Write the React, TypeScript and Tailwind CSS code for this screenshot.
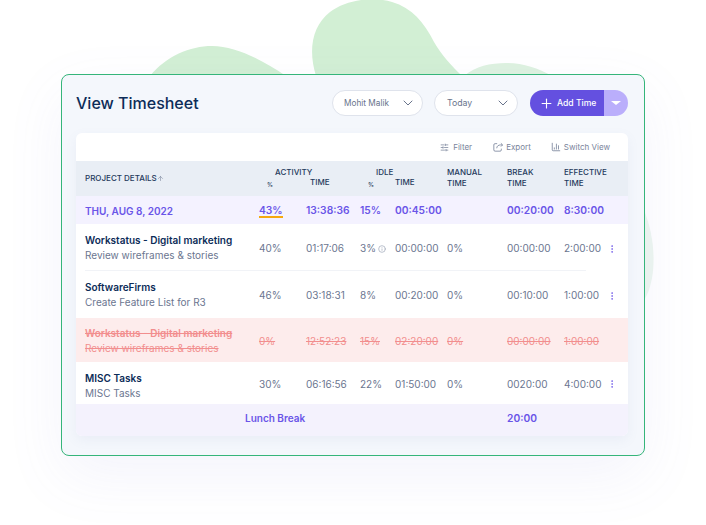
import { ChevronDown, Plus, SlidersHorizontal, ChartColumn, Info, EllipsisVertical, ArrowUp } from 'lucide-react'

const cols = 'grid grid-cols-[174px_47px_54px_35px_52px_60px_57px_48px_1fr] pl-[9px] items-center'

interface Row {
  title: string
  sub: string
  activity: string
  time: string
  idle: string
  idleTime: string
  manual: string
  brk: string
  effective: string
  info?: boolean
  height: string
  divider?: boolean
  namePad?: string
}

const rows: Row[] = [
  {
    title: 'Workstatus - Digital marketing',
    sub: 'Review wireframes & stories',
    activity: '40%',
    time: '01:17:06',
    idle: '3%',
    idleTime: '00:00:00',
    manual: '0%',
    brk: '00:00:00',
    effective: '2:00:00',
    info: true,
    height: 'h-[47px] pt-[2px]',
    divider: true,
    namePad: '-mt-[2px]',
  },
  {
    title: 'SoftwareFirms',
    sub: 'Create Feature List for R3',
    activity: '46%',
    time: '03:18:31',
    idle: '8%',
    idleTime: '00:20:00',
    manual: '0%',
    brk: '00:10:00',
    effective: '1:00:00',
    height: 'h-[47px] pt-[2px]',
    namePad: '-mt-[2px]',
  },
]

const Dots = () => <EllipsisVertical className="w-[10px] h-[10px] -ml-[5px] text-[#7a66ea]" strokeWidth={2} />

const ExportIcon = () => (
  <svg className="w-[10px] h-[10px]" viewBox="0 0 12 12" fill="none" stroke="currentColor" strokeWidth="1">
    <path d="M5 2H2.500A1.500 1.500 0 0 0 1 3.500v6A1.500 1.500 0 0 0 2.500 11h6A1.500 1.500 0 0 0 10 9.500V8" />
    <path d="M4.500 7.500C4.500 5 6.500 3.500 9 3.500H11.500M9.500 1.500L11.500 3.500L9.500 5.500" />
  </svg>
)

const DataRow = ({ row }: { row: Row }) => (
  <div className={`${cols} ${row.height} relative text-[10px] text-[#6b7690]`}>
    <div className={`min-w-0 ${row.namePad ?? ''}`}>
      <div className="text-[10px] leading-[15px] font-semibold text-[#0c2c58] whitespace-nowrap">{row.title}</div>
      <div className="text-[10px] leading-[15px] text-[#6b7690] whitespace-nowrap">{row.sub}</div>
    </div>
    <div>{row.activity}</div>
    <div>{row.time}</div>
    <div className="flex items-center gap-[2px]">
      {row.idle}
      {row.info && <Info className="w-[8px] h-[8px] text-[#9aa3b5]" />}
    </div>
    <div>{row.idleTime}</div>
    <div>{row.manual}</div>
    <div>{row.brk}</div>
    <div>{row.effective}</div>
    <Dots />
    {row.divider && <div className="absolute left-[9px] right-[42px] bottom-0 h-px bg-[#f1f3f7]" />}
  </div>
)

const App = () => {
  return (
    <div className="relative w-[706px] h-[525px] overflow-hidden bg-white pt-[74px] pl-[61px] font-['Inter',sans-serif]">
      {/* green blobs behind the card */}
      <svg className="absolute left-0 top-0" width="706" height="525" viewBox="0 0 706 525">
        <path d="M150 76 C166 56 190 46 212 46 C236 46 262 60 286 76 Z" fill="#d2efd4" />
        <path d="M316 76 C308 50 312 26 330 12 C346 0 372 -4 392 2 C412 8 424 22 434 42 C442 56 452 66 462 76 Z" fill="#d2efd4" />
        <path d="M464 76 C476 66 490 63 506 63 C522 63 538 68 552 76 Z" fill="#def2e0" />
        <path d="M644 210 C652 230 656 255 652 278 C650 288 648 294 644 300 Z" fill="#eef7f0" />
      </svg>

      <div className="relative w-[584px] h-[382px] rounded-[8px] border border-[#35b57a] bg-[#f4f7fc] pt-[15px] pl-[14px] pr-[16px] shadow-[0_20px_60px_rgba(120,110,220,0.08)]">
        {/* header */}
        <div className="flex items-center h-[26px]">
          <h1 className="text-[16px] font-medium text-[#0c2c58] leading-none">View Timesheet</h1>
          <div className="ml-auto flex items-center">
            <div className="flex items-center justify-between w-[91px] h-[26px] rounded-full border border-[#dfe3ec] bg-white pl-[11px] pr-[6px] text-[8.25px] text-[#69748c]">
              <span className="pt-[1px]">Mohit Malik</span>
              <ChevronDown className="w-[16px] h-[16px] text-[#69748c]" strokeWidth={1.5} />
            </div>
            <div className="flex items-center justify-between w-[84px] h-[26px] ml-[11px] rounded-full border border-[#dfe3ec] bg-white pl-[12px] pr-[6px] text-[8.75px] text-[#69748c]">
              <span className="pt-[2px]">Today</span>
              <ChevronDown className="w-[16px] h-[16px] text-[#69748c]" strokeWidth={1.5} />
            </div>
            <div className="flex items-center h-[26px] ml-[12px] rounded-full overflow-hidden">
              <div className="flex items-center w-[74px] h-full bg-[#6450e0] pl-[9px] text-[8.6px] font-medium text-white">
                <Plus className="w-[15px] h-[15px] mr-[3px]" strokeWidth={1.75} />
                <span className="pt-[1px]">Add Time</span>
              </div>
              <div className="flex items-center justify-center w-[24px] h-full bg-[#baaefb]">
                <div className="w-0 h-0 border-x-[5px] border-x-transparent border-t-[4px] border-t-white" />
              </div>
            </div>
          </div>
        </div>

        {/* table */}
        <div className="mt-[17px] w-[552px] h-[303px] rounded-[6px] bg-white overflow-hidden shadow-[0_4px_12px_rgba(120,130,180,0.08)]">
          <div className="flex items-center justify-end gap-[20px] h-[28px] pr-[18px] text-[8px] text-[#7a849b]">
            <span className="flex items-center gap-[4px] mr-[1px]">
              <SlidersHorizontal className="w-[9px] h-[9px]" />
              Filter
            </span>
            <span className="flex items-center gap-[3px]">
              <ExportIcon />
              Export
            </span>
            <span className="flex items-center gap-[3px]">
              <ChartColumn className="w-[10px] h-[10px]" />
              Switch View
            </span>
          </div>

          {/* column heads */}
          <div className={`${cols} h-[35px] bg-[#e9eef5] text-[8px] leading-[11px] text-[#1f3a5c] font-medium`}>
            <div className="flex items-center">
              PROJECT DETAILS
              <ArrowUp className="w-[7px] h-[7px] text-[#7a849b]" />
            </div>
            <div className="col-span-2 relative h-full">
              <span className="absolute left-[16px] top-[6px]">ACTIVITY</span>
              <span className="absolute left-[8px] top-[18px] text-[6px]">%</span>
              <span className="absolute left-[51px] top-[16px]">TIME</span>
            </div>
            <div className="col-span-2 relative h-full">
              <span className="absolute left-[16px] top-[6px]">IDLE</span>
              <span className="absolute left-[8px] top-[18px] text-[6px]">%</span>
              <span className="absolute left-[35px] top-[16px]">TIME</span>
            </div>
            <div className="pb-[2px]">MANUAL<br />TIME</div>
            <div className="pb-[2px]">BREAK<br />TIME</div>
            <div className="col-span-2 pb-[2px]">EFFECTIVE<br />TIME</div>
          </div>

          {/* date row */}
          <div className={`${cols} h-[28px] pt-[2px] bg-[#f4f2ff] text-[10.25px] font-semibold text-[#6a55e8]`}>
            <div className="text-[10px]">THU, AUG 8, 2022</div>
            <div><span className="border-b-2 border-[#f5a90f]">43%</span></div>
            <div>13:38:36</div>
            <div>15%</div>
            <div>00:45:00</div>
            <div />
            <div>00:20:00</div>
            <div>8:30:00</div>
            <div />
          </div>

          {rows.map((row) => (
            <DataRow key={row.title} row={row} />
          ))}

          {/* deleted entry */}
          <div className={`${cols} h-[44px] pt-[2px] bg-[#fdecec] text-[10px] text-[#f28e8e] line-through`}>
            <div>
              <div className="leading-[15px] font-semibold whitespace-nowrap">Workstatus - Digital marketing</div>
              <div className="leading-[15px] whitespace-nowrap">Review wireframes &amp; stories</div>
            </div>
            <div>0%</div>
            <div>12:52:23</div>
            <div>15%</div>
            <div>02:20:00</div>
            <div>0%</div>
            <div>00:00:00</div>
            <div>1:00:00</div>
            <div />
          </div>

          <DataRow
            row={{
              title: 'MISC Tasks',
              sub: 'MISC Tasks',
              activity: '30%',
              time: '06:16:56',
              idle: '22%',
              idleTime: '01:50:00',
              manual: '0%',
              brk: '0020:00',
              effective: '4:00:00',
              height: 'h-[42px] pt-[2px]',
              namePad: 'pt-[4px]',
            }}
          />

          {/* lunch break */}
          <div className={`${cols} h-[32px] pb-[3px] bg-[#f4f2fd] text-[10.25px] font-semibold text-[#6a55e8]`}>
            <div className="pl-[160px] col-span-5 text-[10px] whitespace-nowrap">Lunch Break</div>
            <div className="col-start-7">20:00</div>
          </div>
        </div>
      </div>
    </div>
  )
}

export default App
